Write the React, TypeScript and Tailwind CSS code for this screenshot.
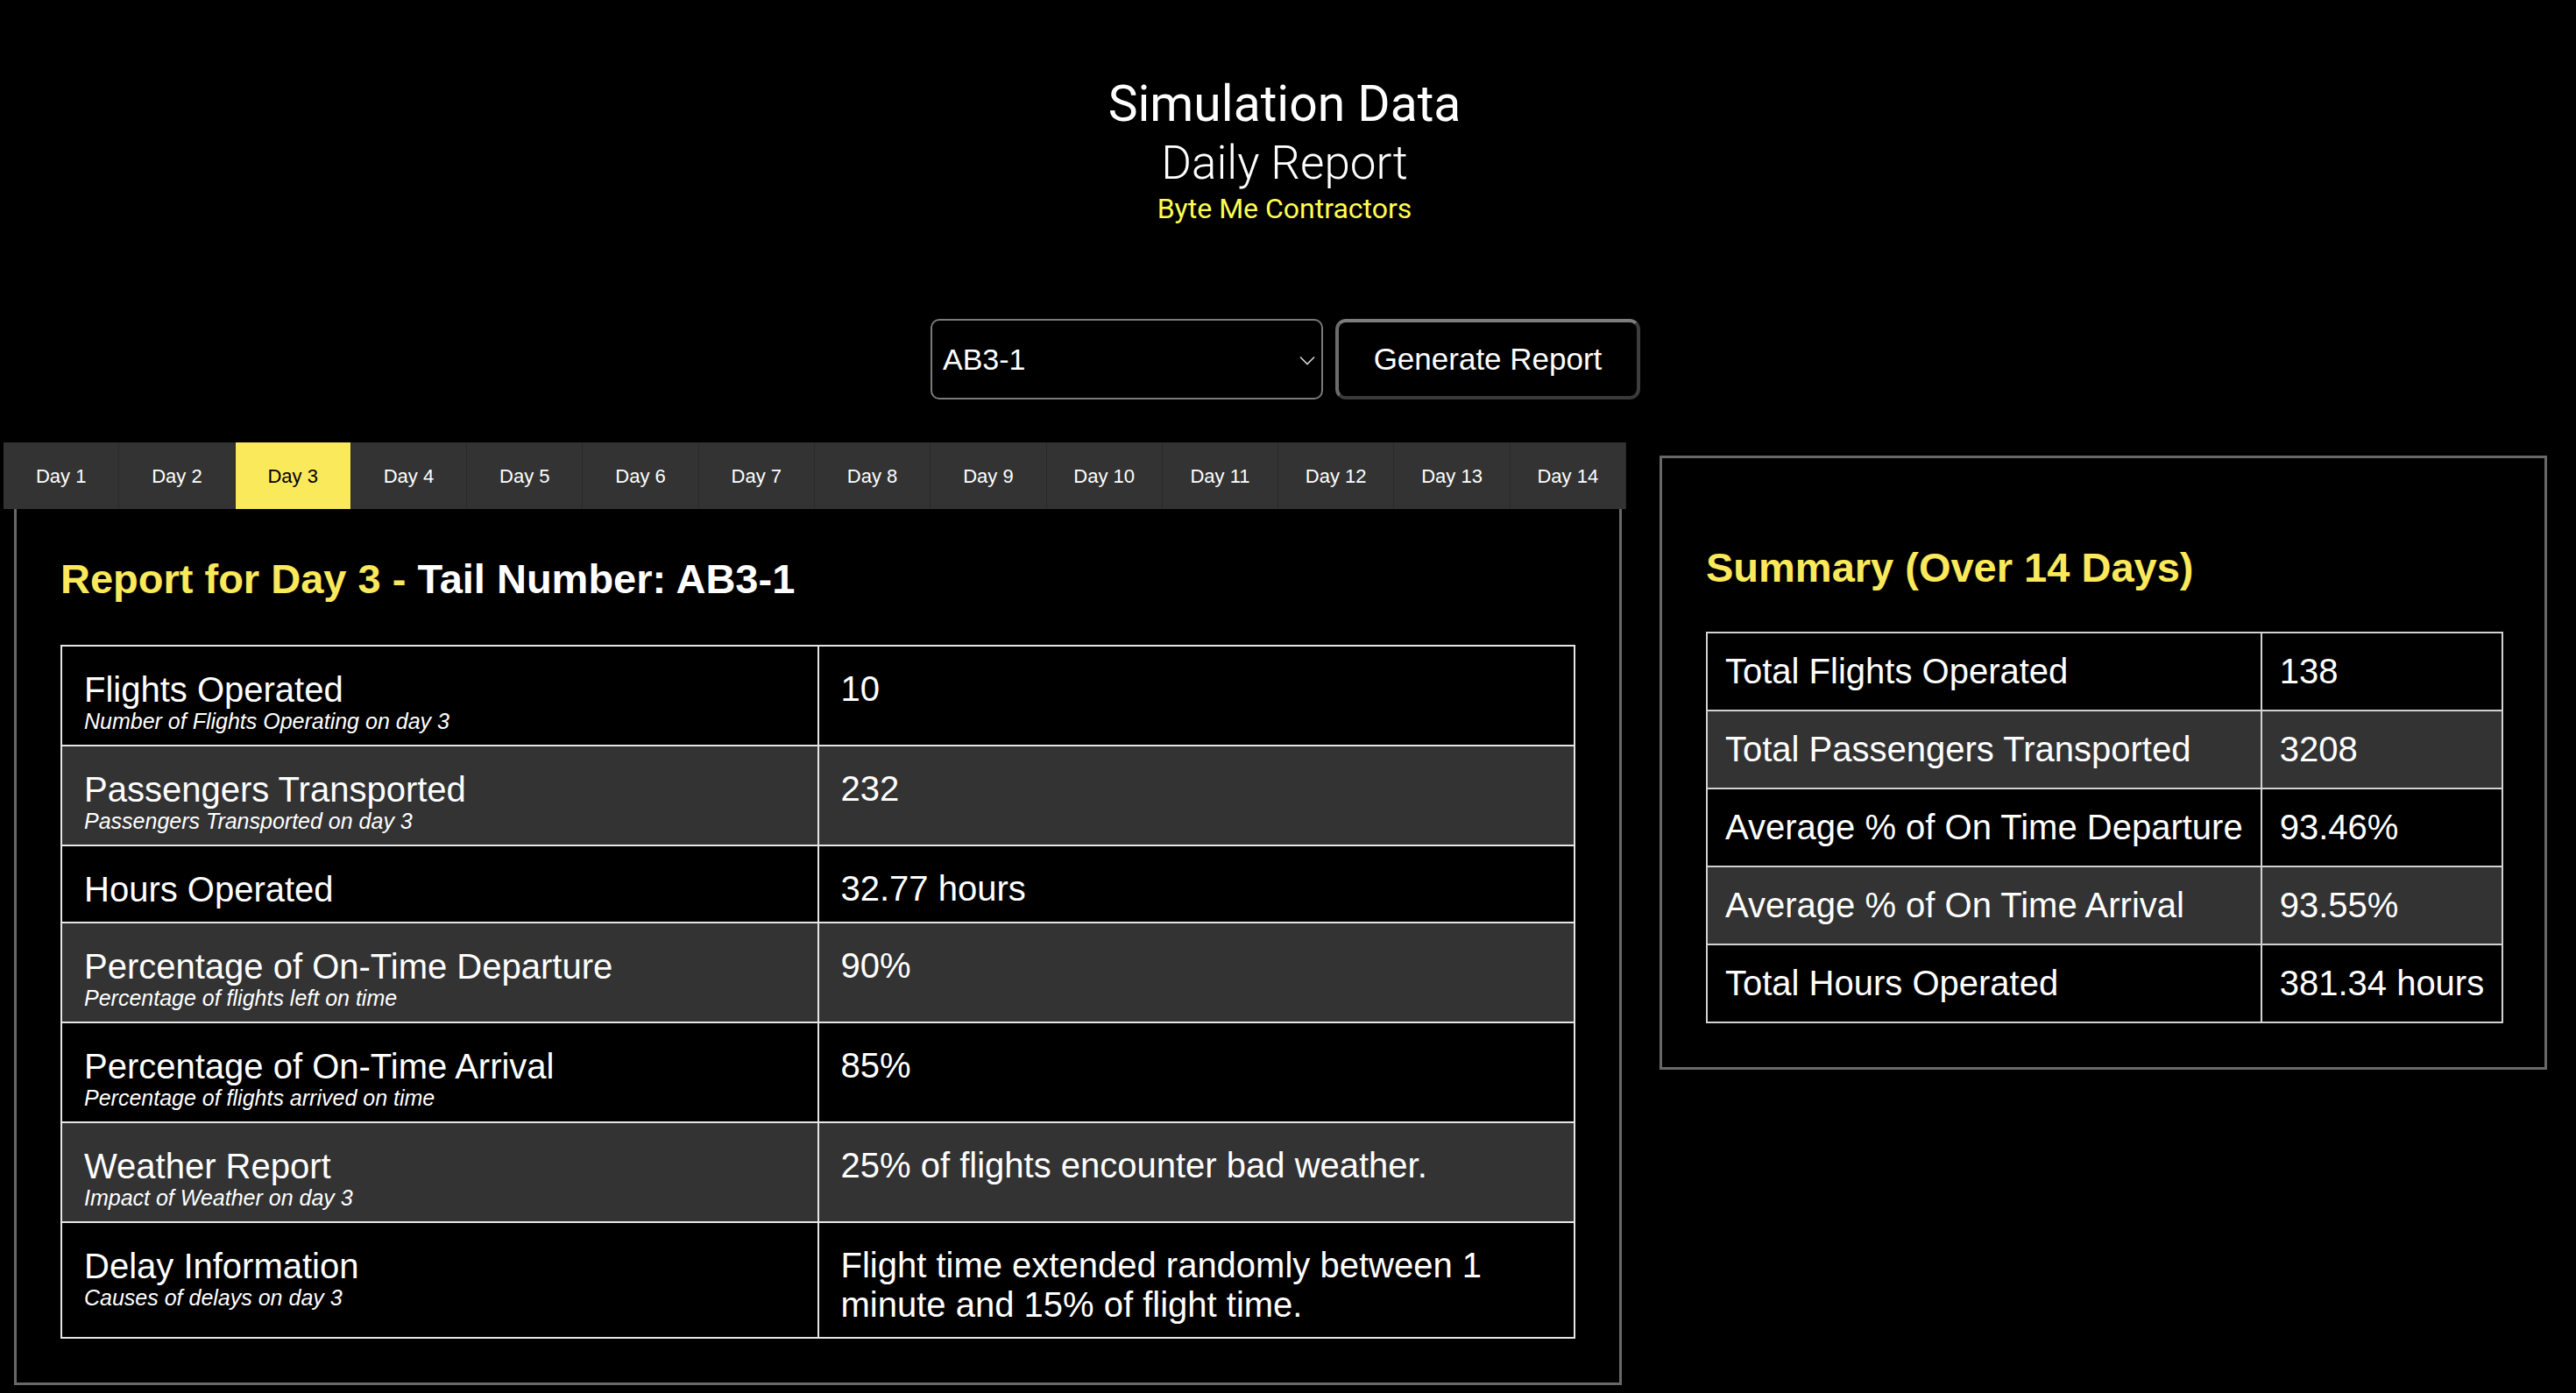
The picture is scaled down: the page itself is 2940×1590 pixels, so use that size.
const days = Array.from({ length: 14 }, (_, i) => i + 1);

const dayRows = [
  { label: "Flights Operated", sub: "Number of Flights Operating on day 3", value: "10" },
  { label: "Passengers Transported", sub: "Passengers Transported on day 3", value: "232" },
  { label: "Hours Operated", sub: "", value: "32.77 hours" },
  { label: "Percentage of On-Time Departure", sub: "Percentage of flights left on time", value: "90%" },
  { label: "Percentage of On-Time Arrival", sub: "Percentage of flights arrived on time", value: "85%" },
  { label: "Weather Report", sub: "Impact of Weather on day 3", value: "25% of flights encounter bad weather." },
  {
    label: "Delay Information",
    sub: "Causes of delays on day 3",
    value: "Flight time extended randomly between 1 minute and 15% of flight time.",
  },
];

const summaryRows = [
  ["Total Flights Operated", "138"],
  ["Total Passengers Transported", "3208"],
  ["Average % of On Time Departure", "93.46%"],
  ["Average % of On Time Arrival", "93.55%"],
  ["Total Hours Operated", "381.34 hours"],
];

function Chevron() {
  return (
    <svg width="18" height="11" viewBox="0 0 18 11" fill="none" className="absolute right-[7px] top-[40px]">
      <path d="M1 1.5 L9 9.5 L17 1.5" stroke="#d4d4d4" strokeWidth="1.6" />
    </svg>
  );
}

export default function App() {
  return (
    <div className="min-h-screen bg-black text-white font-['Liberation_Sans',Arial,sans-serif]">
      <header className="flex flex-col items-center pr-[8px] pt-[86px] font-['Roboto',sans-serif]">
        <h1 className="text-[57px] leading-[66px] font-normal">Simulation Data</h1>
        <h2 className="text-[53px] leading-[68px] font-light">Daily Report</h2>
        <p className="text-[32px] leading-[36px] text-[#ffff50]">Byte Me Contractors</p>
      </header>

      <div className="mt-[108px] flex justify-center gap-[14px] pr-[6px]">
        <div className="relative flex h-[92px] w-[448px] items-center rounded-[10px] border-2 border-[#7a7a7a] bg-black pl-[12px] text-[34px]">
          AB3-1
          <Chevron />
        </div>
        <button className="h-[92px] w-[348px] rounded-[12px] border-[4px] border-t-[#7d7d7d] border-l-[#6c6c6c] border-r-[#3e3e3e] border-b-[#3a3a3a] bg-black text-[35px] text-white">
          Generate Report
        </button>
      </div>

      <div className="mt-[49px] flex items-start pl-[4px]">
        <div className="w-[1852px]">
          <div className="flex h-[76px] bg-[#333333]">
            {days.map((d) => (
              <div
                key={d}
                className={`flex flex-1 items-center justify-center border-r border-[#2a2a2a] text-[22px] ${
                  d === 3 ? "bg-[#fbe95c] text-black" : "text-white"
                }`}
              >
                Day {d}
              </div>
            ))}
          </div>

          <section className="ml-[12px] w-[1835px] border-[3px] border-t-0 border-[#686868] px-[50px] pt-[53px] pb-[50px]">
            <h3 className="mb-[49px] text-[47px] leading-[53px] font-bold">
              <span className="text-[#fbe95c]">Report for Day 3 - </span>
              <span>Tail Number: AB3-1</span>
            </h3>
            <table className="w-full table-fixed border-collapse">
              <tbody>
                {dayRows.map((r, i) => (
                  <tr key={r.label} className={i % 2 ? "bg-[#333333]" : "bg-black"}>
                    <td className="border-2 border-[#e6e6e6] px-[25px] pt-[26px] pb-[14px] align-top">
                      <div className="text-[40px] leading-[46px]">{r.label}</div>
                      {r.sub && <div className="text-[25px] leading-[26px] italic">{r.sub}</div>}
                    </td>
                    <td className="border-2 border-[#e6e6e6] px-[25px] pt-[26px] pb-[14px] align-top text-[40px] leading-[45px]">
                      {r.value}
                    </td>
                  </tr>
                ))}
              </tbody>
            </table>
          </section>
        </div>

        <aside className="mt-[15px] ml-[38px] w-[1013px] border-[3px] border-[#686868] px-[50px] pt-[50px] pb-[50px]">
          <h3 className="mt-[48px] mb-[47px] text-[47px] leading-[53px] font-bold text-[#fbe95c]">
            Summary (Over 14 Days)
          </h3>
          <table className="border-collapse">
            <tbody>
              {summaryRows.map(([k, v], i) => (
                <tr key={k} className={i % 2 ? "bg-[#333333]" : "bg-black"}>
                  <td className="whitespace-nowrap border-2 border-[#d2d2d2] px-[20px] py-[20px] text-[40px] leading-[47px]">
                    {k}
                  </td>
                  <td className="whitespace-nowrap border-2 border-[#d2d2d2] px-[20px] py-[20px] text-[40px] leading-[47px]">
                    {v}
                  </td>
                </tr>
              ))}
            </tbody>
          </table>
        </aside>
      </div>
    </div>
  );
}
